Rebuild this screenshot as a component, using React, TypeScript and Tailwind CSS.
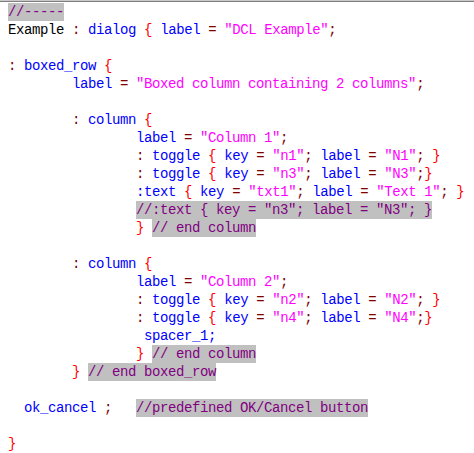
import React from "react";

type Kind = "txt" | "kw" | "op" | "br" | "str" | "cm";

// token colours, written out in full so tailwind picks them up
const kindClass: Record<Kind, string> = {
  txt: "text-black",
  kw: "text-[#0000ff]",
  op: "text-[#800000]",
  br: "text-[#ff0000]",
  str: "text-[#ff00ff]",
  cm: "inline-block h-[18px] bg-[#c0c0c0] text-[#800080]",
};

type Tok = [string, Kind];

const sp = (n: number): Tok => [" ".repeat(n), "txt"];

const toggle = (key: string, label: string, tight: boolean): Tok[] => [
  sp(16),
  [":", "op"],
  [" ", "txt"],
  ["toggle", "kw"],
  [" ", "txt"],
  ["{", "br"],
  [" ", "txt"],
  ["key", "kw"],
  [" ", "txt"],
  ["=", "op"],
  [" ", "txt"],
  [`"${key}"`, "str"],
  [";", "op"],
  [" ", "txt"],
  ["label", "kw"],
  [" ", "txt"],
  ["=", "op"],
  [" ", "txt"],
  [`"${label}"`, "str"],
  [";", "op"],
  [tight ? "" : " ", "txt"],
  ["}", "br"],
];

const labelLine = (indent: number, text: string): Tok[] => [
  sp(indent),
  ["label", "kw"],
  [" ", "txt"],
  ["=", "op"],
  [" ", "txt"],
  [`"${text}"`, "str"],
  [";", "op"],
];

const columnOpen: Tok[] = [sp(8), [":", "op"], [" ", "txt"], ["column", "kw"], [" ", "txt"], ["{", "br"]];

const lines: Tok[][] = [
  [["//-----", "cm"]],
  [
    ["Example", "txt"],
    [" ", "txt"],
    [":", "op"],
    [" ", "txt"],
    ["dialog", "kw"],
    [" ", "txt"],
    ["{", "br"],
    [" ", "txt"],
    ["label", "kw"],
    [" ", "txt"],
    ["=", "op"],
    [" ", "txt"],
    ['"DCL Example"', "str"],
    [";", "op"],
  ],
  [],
  [[":", "op"], [" ", "txt"], ["boxed_row", "kw"], [" ", "txt"], ["{", "br"]],
  labelLine(8, "Boxed column containing 2 columns"),
  [],
  columnOpen,
  labelLine(16, "Column 1"),
  toggle("n1", "N1", false),
  toggle("n3", "N3", true),
  [
    sp(16),
    [":text", "kw"],
    [" ", "txt"],
    ["{", "br"],
    [" ", "txt"],
    ["key", "kw"],
    [" ", "txt"],
    ["=", "op"],
    [" ", "txt"],
    ['"txt1"', "str"],
    [";", "op"],
    [" ", "txt"],
    ["label", "kw"],
    [" ", "txt"],
    ["=", "op"],
    [" ", "txt"],
    ['"Text 1"', "str"],
    [";", "op"],
    [" ", "txt"],
    ["}", "br"],
  ],
  [sp(16), ['//:text { key = "n3"; label = "N3"; }', "cm"]],
  [sp(16), ["}", "br"], [" ", "txt"], ["// end column", "cm"]],
  [],
  columnOpen,
  labelLine(16, "Column 2"),
  toggle("n2", "N2", false),
  toggle("n4", "N4", true),
  [sp(17), ["spacer_1;", "kw"]],
  [sp(16), ["}", "br"], [" ", "txt"], ["// end column", "cm"]],
  [sp(8), ["}", "br"], [" ", "txt"], ["// end boxed_row", "cm"]],
  [],
  [sp(2), ["ok_cancel", "kw"], [" ", "txt"], [";", "op"], sp(3), ["//predefined OK/Cancel button", "cm"]],
  [],
  [["}", "br"]],
];

const App = () => {
  return (
    <div className="w-[474px] h-[453px] overflow-hidden bg-white">
      <div className="h-[1px] bg-[#c8c8c8]" />
      <div className="h-[1px] bg-[#808080]" />
      <div className="pt-[1px] pl-2 font-['Liberation_Mono',monospace] text-[14px] tracking-[-0.4px]">
        {lines.map((line, i) => (
          <div key={i} className="h-[18px] leading-[18px] whitespace-pre">
            {line.map(([t, k], j) => (
              <span key={j} className={kindClass[k]}>
                {t}
              </span>
            ))}
          </div>
        ))}
      </div>
    </div>
  );
};

export default App;
